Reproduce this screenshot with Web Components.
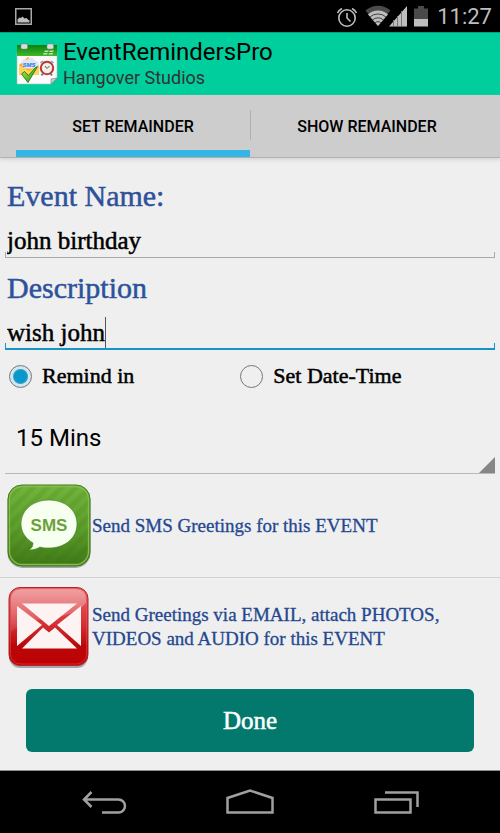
<!DOCTYPE html>
<html lang="en">
<head>
<meta charset="utf-8">
<meta name="viewport" content="width=device-width, initial-scale=1">
<title>EventRemindersPro</title>
<style>
html { height: 100%; }
body { margin: 0; min-height: 100%; display: flex; flex-direction: column; background: #efefef; font-family: Roboto, sans-serif; color: #000; --display: "Liberation Serif", serif; }
reminder-form { flex: 1; }
</style>
</head>
<body>
<status-bar></status-bar>
<app-header><span slot="title">EventRemindersPro</span><span slot="subtitle">Hangover Studios</span></app-header>
<tab-bar><span slot="first">SET REMAINDER</span><span slot="second">SHOW REMAINDER</span></tab-bar>
<reminder-form></reminder-form>
<nav-bar></nav-bar>

<script>
function define(name, html, setup) {
  const template = document.createElement('template');
  template.innerHTML = '<style>:host,*{box-sizing:border-box}svg{display:block;flex:none}button,input,select{font:inherit;color:inherit;background:none;border:0;padding:0;margin:0;outline:0}</style>' + html;
  customElements.define(name, class extends HTMLElement {
    constructor() {
      super();
      this.attachShadow({ mode: 'open' }).append(template.content.cloneNode(true));
      if (setup) setup(this);
    }
  });
}

define('status-bar', `
<style>
:host { display: flex; align-items: center; height: 32px; padding: 0 8px 0 15px; background: #000; color: #bebebe; font-size: 22px; line-height: 32px; }
.right { display: flex; align-items: center; margin-left: auto; }
.clock { margin-left: 8px; padding-top: 2px; }
</style>
<svg width="17" height="17" viewBox="0 0 17 17"><path d="M.75.75h15.5v15.5H.75z" fill="none" stroke="#a9a9a9" stroke-width="1.5"/><path d="M2.500 14.500v-3l2-2 1.500.5 1.500-1.500 2 2 2-.5 2 2 1 .5v2z" fill="#bebebe"/></svg>
<div class="right">
<svg width="94" height="24" viewBox="0 -1 94 24">
<g fill="none" stroke="#bebebe" stroke-width="1.600"><circle cx="12" cy="13" r="8.200"/><path d="M12 8v5l3.500 3.500M2.500 8a9 9 0 0 1 4.500-4.500M21.500 8a9 9 0 0 0-4.500-4.500"/></g>
<path d="M30.500 5.500a19 19 0 0 1 25 0L43 21z" fill="#4a4a4a"/>
<path d="M33 9.500a14.500 14.500 0 0 1 20 0L43 21z" fill="#bebebe"/>
<path d="M35 12a12 12 0 0 1 16 0M37.500 15a8 8 0 0 1 11 0M40 18a4 4 0 0 1 6 0" fill="none" stroke="#222" stroke-width=".8"/>
<path d="M72 1v20.500H54z" fill="#bebebe"/><path d="M58.500 15v6.500M62.500 11v10.500M66.500 6v15.500" stroke="#777" stroke-width="1"/>
<path d="M79 3.500h4V1h6v2.500h4V14H79z" fill="#4a4a4a"/><path d="M79 14h14v7.500H79z" fill="#bebebe"/>
</svg>
<span class="clock">11:27</span>
</div>`);

define('app-icon', `
<style>:host { display: block; }</style>
<svg width="42" height="42" viewBox="0 0 42 42">
<defs><linearGradient id="g" x2="0" y2="1"><stop stop-color="#07820b"/><stop offset="1" stop-color="#43b72c"/></linearGradient>
<linearGradient id="c" x2="1" y2="1"><stop stop-color="#b5f13d"/><stop offset="1" stop-color="#159415"/></linearGradient></defs>
<path d="M1 10h40v25l-6 6H1z" fill="#fbfbfb" stroke="#a3c7ba" stroke-width=".6"/>
<path d="M35 41v-5l6-1z" fill="#ccc" stroke="#777" stroke-width=".6"/>
<path d="M1 2h40v11H1z" fill="url(#g)"/>
<path d="M28 9l1-1.500h4L32 9zm5 0 1-1.500h4L37 9zM27 11.500l.7-1.400h4l-.7 1.400zm5.500 0 .7-1.400h4l-.7 1.400z" fill="#bfe5af"/>
<rect x="5" y="1" width="6.500" height="5" rx="1.500" fill="#ddd" stroke="#888" stroke-width=".5"/><rect x="31" y="1" width="6.500" height="5" rx="1.500" fill="#ddd" stroke="#888" stroke-width=".5"/>
<path d="M3 22l9-8 11 8v10H3z" fill="#f5b221"/><path d="M3 22l10 6 10-6v10H3z" fill="#ffd258"/>
<path d="M6 21c-2-3 2-6 5-4 2-4 8-2 8 1 4 0 5 4 2 6-4 2-9 2-13 1z" fill="#e3e6ee"/>
<text x="6.500" y="23.500" font-family="Liberation Sans" font-size="6" font-style="italic" font-weight="700" fill="#1873ee">SMS</text>
<path d="M27 30.500l-1.500 2M34.500 30.500l1.500 2" stroke="#68779e" stroke-width="2"/>
<circle cx="31" cy="25" r="6.200" fill="#f3eee8" stroke="#ba3732" stroke-width="2"/><path d="M29 23l2 2.500 2.500-2.500" fill="none" stroke="#555"/>
<path d="M24.500 20l2.500-2M37.500 20l-2.500-2" stroke="#8795bb" stroke-width="1.500"/>
<path d="M5.500 31l3-2.500 4 4L19 25l2.500-1.500L12 39.500z" fill="url(#c)" stroke="#166515" stroke-width=".8"/>
</svg>`);

define('app-header', `
<style>
:host { display: flex; align-items: center; gap: 5px; height: 63px; padding: 0 16px; background: #00ce9c; border-top: 1px solid #00a47c; }
.name { font-size: 24px; line-height: 27px; margin: 0; font-weight: 400; }
.by { font-size: 18px; line-height: 23px; color: #333; margin: 0; }
</style>
<app-icon></app-icon>
<div><h1 class="name"><slot name="title"></slot></h1><p class="by"><slot name="subtitle"></slot></p></div>`);

define('tab-bar', `
<style>
:host { display: flex; height: 63px; padding: 0 16px; background: #cdcdcd; border-bottom: 1px solid #b2b2b2; box-shadow: 0 2px 3px #d5d5d5; font-size: 16px; font-weight: 500; }
button { position: relative; flex: 1; border-bottom: 7px solid transparent; padding-top: 7px; }
button[aria-selected=true] { border-color: #33b5e5; }
button + button::before { content: ""; position: absolute; left: 0; top: 15px; width: 1px; height: 30px; background: #b0b0b0; }
</style>
<button role="tab" aria-selected="true"><slot name="first"></slot></button><button role="tab" aria-selected="false"><slot name="second"></slot></button>`);

define('text-field', `
<style>
:host { display: block; padding: 12px 5px 0; --line: #a9a9a9; --weight: 1px; }
:host([active]) { --line: #1595c5; --weight: 2px; }
label { display: block; padding-left: 2px; font: 30px/36px var(--display); color: #2d529b; -webkit-text-stroke: 0.5px #2d529b; }
.box { position: relative; display: flex; height: 44px; padding: 13px 2px 3px; }
.box::after { content: ""; position: absolute; inset: auto 0 0; height: 5px; border: solid var(--line); border-width: 0 1px var(--weight); pointer-events: none; }
input { flex: 1; min-width: 0; font: 25px/28px var(--display); height: 28px; -webkit-text-stroke: 0.5px #000; }
:host([active]) input { flex: none; field-sizing: content; caret-color: transparent; }
i { display: none; width: 1px; height: 31px; background: #555; margin-top: -2px; }
:host([active]) i { display: block; }
</style>
<label for="f"></label><div class="box"><input id="f" type="text"><i></i></div>`,
el => {
  el.shadowRoot.querySelector('label').textContent = el.getAttribute('label');
  el.shadowRoot.querySelector('input').value = el.getAttribute('value');
});

define('sms-icon', `
<style>:host { display: block; }</style>
<svg width="86" height="86" viewBox="0 0 86 86">
<defs><linearGradient id="g" x2="0" y2="1"><stop stop-color="#72b43c"/><stop offset=".55" stop-color="#5c9c2b"/><stop offset="1" stop-color="#3f7818"/></linearGradient>
<pattern id="p" width="10" height="10" patternUnits="userSpaceOnUse" patternTransform="rotate(45)"><path d="M0 0h5v10H0z" fill="#2f6d0b" opacity=".13"/></pattern></defs>
<rect x="1.500" y="3" width="83" height="82" rx="15" fill="#777" opacity=".6"/>
<rect x="2" y="2" width="82" height="81" rx="14" fill="url(#g)" stroke="#447922"/>
<rect x="2" y="2" width="82" height="81" rx="14" fill="url(#p)"/>
<rect x="3.500" y="3.500" width="79" height="78" rx="13" fill="none" stroke="#86bd4a" stroke-width="1.300"/>
<path d="M43 17c16 0 28 10 28 24S59 65 43 65c-4 0-6 0-9-1-3 2-7 3-11 3 3-2 4-4 4-7-7-4-12-11-12-19 0-14 12-24 28-24z" fill="#f7fff0" stroke="#4e8728" stroke-width=".7"/>
<text x="43" y="48" text-anchor="middle" font-family="Liberation Sans" font-weight="700" font-size="17" fill="#6ba13b">SMS</text>
</svg>`);

define('email-icon', `
<style>:host { display: block; }</style>
<svg width="86" height="86" viewBox="0 0 86 86">
<defs><linearGradient id="r" x2="0" y2="1"><stop stop-color="#e76366"/><stop offset=".45" stop-color="#d73236"/><stop offset=".75" stop-color="#b90709"/><stop offset="1" stop-color="#c00003"/></linearGradient>
<linearGradient id="w" x2="0" y2="1"><stop stop-color="#fff" stop-opacity=".4"/><stop offset="1" stop-color="#fff" stop-opacity=".08"/></linearGradient></defs>
<rect x="3" y="7" width="79" height="77" rx="11" fill="#777" opacity=".6"/>
<rect x="3" y="3.500" width="79" height="78" rx="11" fill="url(#r)" stroke="#b52227"/>
<path d="M5 38V15q0-10 10-10h55q10 0 10 10v4Q70 31 45 34 18 36 5 48z" fill="url(#w)"/>
<rect x="4.500" y="5" width="76" height="75" rx="10" fill="none" stroke="#ec6669" stroke-width="1" opacity=".4"/>
<g fill="#fdf3f3"><path d="M16 19.500h55L43 42z"/><path d="M11 22l25 19-25 21z"/><path d="M75 22v40L51 41z"/><path d="M16 64.500l21-21 6 5L49 43.500l22 21z"/></g>
</svg>`);

define('action-row', `
<style>
:host { display: block; border-bottom: 1px solid var(--rule, transparent); }
button { display: flex; align-items: center; width: 100%; height: var(--row, 98px); padding: 0 40px 0 6px; text-align: left; font: 19px/24px var(--display); color: #24488f; -webkit-text-stroke: 0.3px #24488f; }
slot[name=icon] { display: block; flex: none; }
</style>
<button type="button"><slot name="icon"></slot><span><slot></slot></span></button>`);

define('reminder-form', `
<style>
:host { display: block; padding: 8px 0 18px; }
.choices { display: grid; grid-template-columns: 12fr 13fr; align-items: center; height: 52px; padding: 0 9px; font: 22px/28px var(--display); -webkit-text-stroke: 0.5px #000; }
.choices label { display: flex; align-items: center; gap: 10px; }
input { appearance: none; flex: none; width: 23px; height: 23px; border: 1px solid #777; border-radius: 50%; }
input:checked { background: radial-gradient(circle, #0799ce 6px, #4c9cba 7px, #cfe8f1 8px); }
.pick { position: relative; margin: 0 5px; border-bottom: 1px solid #b9b9b9; }
.pick::after { content: ""; position: absolute; right: 0; bottom: 0; width: 16px; height: 16px; background: #868686; clip-path: polygon(100% 0, 100% 100%, 0 100%); pointer-events: none; }
select { appearance: none; display: block; width: 100%; height: 71px; padding-left: 11px; font-size: 24px; }
.first { --rule: #d3d3d3; --row: 103px; }
.done { display: block; width: calc(100% - 52px); height: 63px; margin: 12px 26px 0; border-radius: 6px; background: #03796d; color: #fff; font: 25px/28px var(--display); -webkit-text-stroke: 0.5px #fff; }
</style>
<text-field label="Event Name:" value="john birthday"></text-field>
<text-field label="Description" value="wish john" active></text-field>
<div class="choices">
<label><input type="radio" name="when" checked>Remind in</label>
<label><input type="radio" name="when">Set Date-Time</label>
</div>
<div class="pick"><select aria-label="Remind in"><option>15 Mins</option></select></div>
<action-row class="first"><sms-icon slot="icon"></sms-icon>Send SMS Greetings for this EVENT</action-row>
<action-row><email-icon slot="icon"></email-icon>Send Greetings via EMAIL, attach PHOTOS, VIDEOS and AUDIO for this EVENT</action-row>
<button type="button" class="done">Done</button>`);

define('nav-bar', `
<style>
:host { display: flex; align-items: center; justify-content: center; gap: 98px; height: 63px; background: #000; border-top: 1px solid #8d8d8d; }
button { display: block; }
</style>
<button aria-label="Back"><svg width="48" height="28" viewBox="0 0 48 28" fill="none" stroke="#a0a0a0" stroke-width="2.500"><path d="M12.500 4 5 11.500l7.500 7.500M6 11.500h33.500a6.500 6.500 0 0 1 0 13H23"/></svg></button>
<button aria-label="Home"><svg width="50" height="28" viewBox="0 0 50 28" fill="none" stroke="#a0a0a0" stroke-width="2.500"><path d="M2.500 24.500V10L25 2.500 47.500 10v14.500z"/></svg></button>
<button aria-label="Recent apps"><svg width="48" height="28" viewBox="0 0 48 28" fill="none" stroke="#a0a0a0" stroke-width="2.500"><path d="M2.500 11.500h35v13h-35zM12 4.500h32.500V19"/></svg></button>`);
</script>
</body>
</html>
